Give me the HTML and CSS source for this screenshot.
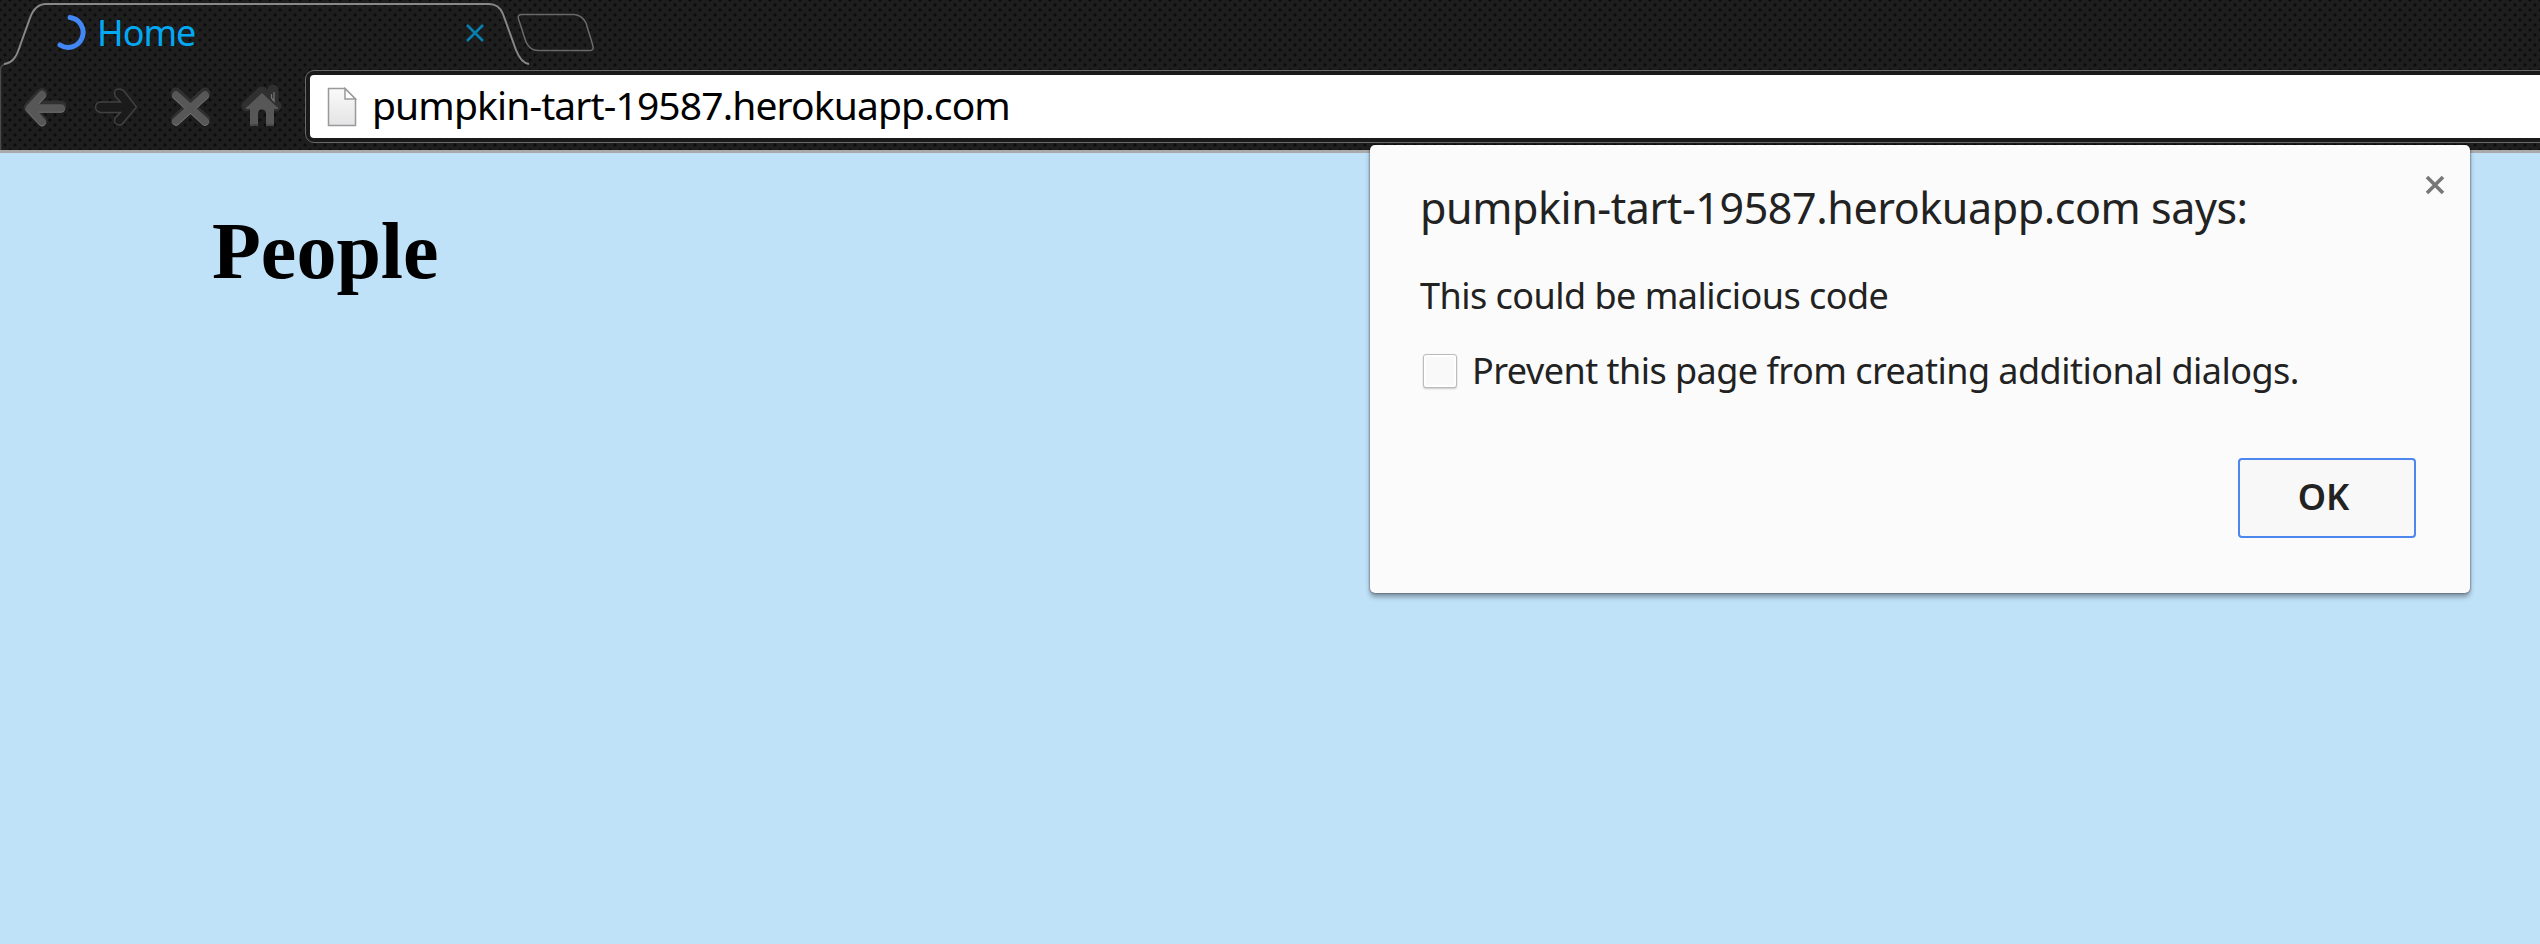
FILE: index.html
```
<!DOCTYPE html>
<html lang="en">
<head>
<meta charset="utf-8">
<title>Home</title>
<link rel="stylesheet" href="styles.css">
</head>
<body>
<div class="window">
  <header class="chrome">
    <div class="tabs">
      <svg class="tab-outline" viewBox="0 0 620 68" fill="none">
        <path class="edge-side" d="M0.500 150V70Q0.500 65 6 64"/>
        <path class="edge" d="M4 64C15 63 18 52 21 43L30 18Q35 4 46 4H489Q499 4 503 14L516 50Q521 63 529 64"/>
        <path class="newtab" d="M522 14.500H574Q582 15 586 23L593 46Q594 50.500 590 50.500H538Q530 50.500 526 42L518.500 19Q517 14.500 522 14.500Z"/>
      </svg>
      <div class="tab">
        <svg class="spinner" viewBox="0 0 30 38" fill="none"><path d="M13 3.500A15 15 0 1 1 3 31"/></svg>
        <span class="tab-title">Home</span>
        <svg class="tab-close" viewBox="0 0 18 18"><path d="M1 1L17 17M17 1L1 17"/></svg>
      </div>
    </div>
    <nav class="toolbar">
      <svg class="buttons" viewBox="0 0 306 82" fill="none">
        <g class="halo">
          <path d="M42 25.500L29 39.500L42 53M32 38H61"/>
          <path d="M176 25L205 52M205 25L176 52"/>
          <path d="M247 38L262 24L276 38M273 32V22"/>
        </g>
        <g class="shine">
          <path d="M42 27.500L29.500 41L42 54.500M32 41H61"/>
          <path d="M176 28L205 54M205 28L176 54"/>
        </g>
        <g class="bars">
          <path d="M42 26.500L29.500 40L42 53.500M32 40H61"/>
          <path d="M176 27L205 53M205 27L176 53"/>
        </g>
        <path class="house" d="M262 25L277.500 39.500H274V56H266V46Q266 41.500 262 41.500T258 46V56H250V39.500H246.500Z"/>
        <path class="house-line" d="M250 57H258M266 57H274M246 40H250M274 40H278M271.500 26V30L274 33V24"/>
        <path class="hollow" d="M100 34H120.500L115 28Q113 21 119 21Q122 21 124 23L136.500 39L124 54Q122 57 119 57Q113 56 115 50L120.500 44.500H100Q95.500 43 95.500 39T100 34Z"/>
      </svg>
      <div class="omnibox">
        <svg class="page-icon" viewBox="0 0 30 40">
          <defs><linearGradient id="paper" x1="0" y1="0" x2="0" y2="1"><stop offset="0" stop-color="#fafafa"/><stop offset="1" stop-color="#e4e4e6"/></linearGradient></defs>
          <path fill="url(#paper)" d="M1.500 1.500H18L28.500 12V38.500H1.500Z"/><path fill="#fff" d="M18 1.500V12H28.500Z"/>
        </svg>
        <span class="url">pumpkin-tart-19587.herokuapp.com</span>
      </div>
    </nav>
  </header>
  <main class="page"><h1>People</h1></main>
  <section class="dialog">
    <svg class="close" viewBox="0 0 20 20"><path d="M2 2L18 18M18 2L2 18"/></svg>
    <h2>pumpkin-tart-19587.herokuapp.com says:</h2>
    <p class="message">This could be malicious code</p>
    <label class="prevent"><span class="box"></span><span class="prevent-text">Prevent this page from creating additional dialogs.</span></label>
    <button class="ok">OK</button>
  </section>
</div>
</body>
</html>
```
FILE: styles.css
```
* { box-sizing: border-box; }
body { margin: 0; background: #c0e2f9; font-family: "Noto Sans", sans-serif; overflow: hidden; }
.window { position: relative; width: 2540px; height: 944px; display: flex; flex-direction: column; }
.chrome {
  height: 153px; border-bottom: 3px solid #aaa8a9;
  background-color: #1e1e1e;
  background-image: radial-gradient(circle, #0c0c0c 0.9px, transparent 2.1px), radial-gradient(circle, #0c0c0c 0.9px, transparent 2.1px);
  background-size: 10px 10px; background-position: 0 0, 5px 5px;
}
.tabs { position: relative; height: 68px; }
.tab-outline { position: absolute; left: 0; top: 0; width: 620px; height: 68px; overflow: visible; }
.edge { stroke: #888; stroke-width: 2; }
.edge-side { stroke: #4a4a4a; stroke-width: 1.5; }
.newtab { stroke: #6a6a6a; stroke-width: 1.5; }
.tab { display: flex; align-items: center; height: 66px; padding-left: 57px; width: 484px; }
.spinner { width: 30px; height: 38px; }
.spinner path { stroke: #4287f5; stroke-width: 5; stroke-linecap: round; }
.tab-title { margin-left: 10px; font-size: 36px; line-height: 50px; letter-spacing: -1px; color: #03a9f4; white-space: nowrap; }
.tab-close { width: 18px; height: 18px; margin-left: auto; flex: none; }
.tab-close path { stroke: #087fac; stroke-width: 2.600; }
.toolbar { display: flex; height: 82px; }
.buttons { width: 306px; height: 82px; flex: none; }
.halo { stroke: #303030; stroke-width: 11; stroke-linecap: round; stroke-linejoin: round; }
.shine { stroke: #777; stroke-width: 7.500; stroke-linecap: round; stroke-linejoin: round; }
.bars { stroke: #575757; stroke-width: 7.500; stroke-linecap: round; stroke-linejoin: round; }
.house { fill: #575757; }
.house-line { stroke: #777; stroke-width: 1.2; }
.hollow { fill: #1b1b1b; stroke: #414141; stroke-width: 1.5; }
.omnibox {
  flex: 1; height: 71px; margin-top: 3px; margin-right: -8px; display: flex; align-items: center;
  border: 4px solid #1a1a1a; border-radius: 8px; outline: 1px solid #686868; background: #fff; padding-left: 17px;
}
.page-icon { width: 30px; height: 40px; }
.page-icon path { stroke: #999; stroke-width: 1.5; }
.url { font-size: 39px; line-height: 56px; letter-spacing: -0.870px; color: #000; margin: -3px 0 0 15px; white-space: nowrap; }
.page { padding-left: 212px; }
h1 { margin: 52px 0 0; font: bold 80px/92px "Liberation Serif", serif; color: #000; }
.dialog {
  position: absolute; left: 1370px; top: 145px; width: 1100px; height: 448px; padding: 34px 54px 55px 50px;
  background: #fbfbfb; border-radius: 5px; color: #222; display: flex; flex-direction: column;
  box-shadow: 0 0 2px rgba(0,0,0,.7), 0 4px 5px rgba(0,0,0,.35);
}
.close { position: absolute; right: 25px; top: 30px; width: 20px; height: 20px; }
.close path { stroke: #777; stroke-width: 3.600; }
h2 { margin: 0; font-size: 43px; line-height: 58px; font-weight: 400; letter-spacing: -0.430px; white-space: nowrap; }
.message { margin: 34px 0 0; font-size: 36px; line-height: 50px; letter-spacing: -0.530px; white-space: nowrap; }
.prevent { display: flex; align-items: center; margin-top: 25px; font-size: 36px; line-height: 50px; letter-spacing: -0.530px; white-space: nowrap; }
.box { width: 34px; height: 34px; margin: 0 15px 0 3px; border: 1.5px solid #bbb; border-radius: 3px; background: #f9f9f9; box-shadow: inset 0 0 0 2px #fff, 0 1px 2px rgba(0,0,0,.2); }
.ok { align-self: flex-end; margin-top: auto; width: 178px; height: 80px; padding: 0 7px 2px 0; border: 2px solid #4d86ee; border-radius: 4px; background: #f8f8f8; font: 600 36px/50px "Noto Sans", sans-serif; color: #222; }
```
